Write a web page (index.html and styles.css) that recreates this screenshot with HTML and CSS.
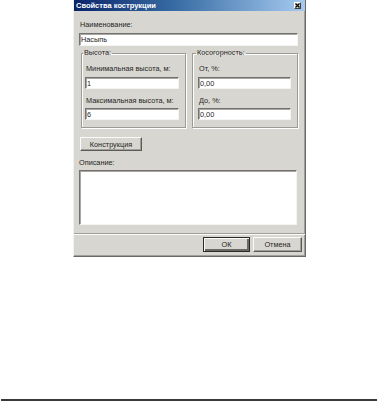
FILE: index.html
```html
<!doctype html>
<html lang="ru">
    <head>
        <meta charset="UTF-8" />
        <meta name="viewport" content="width=device-width, initial-scale=1.0" />
        <title>Свойства кострукции</title>
        <link rel="stylesheet" href="styles.css">
    </head>
    <body>
        <div class="page">
            <div class="dialog">
                <div class="titlebar">
                    <span class="title">Свойства кострукции</span>
                    <span class="close">
                        <svg width="5" height="5" viewBox="0 0 5 5">
                            <path d="M0.5 0.5 L4.5 4.5 M4.5 0.5 L0.5 4.5" stroke="#000" stroke-width="1.2" />
                        </svg>
                    </span>
                </div>

                <div class="content">
                    <div class="label label-first">Наименование:</div>
                    <input class="field field-name" type="text" value="Насыпь" />

                    <div class="groups">
                        <fieldset class="group group-height">
                            <legend>Высота:</legend>
                            <div class="label">Минимальная высота, м:</div>
                            <input class="field" type="text" value="1" />
                            <div class="label label-next">Максимальная высота, м:</div>
                            <input class="field" type="text" value="6" />
                        </fieldset>
                        <fieldset class="group group-slope">
                            <legend>Косогорность:</legend>
                            <div class="label">От, %:</div>
                            <input class="field" type="text" value="0,00" />
                            <div class="label label-next">До, %:</div>
                            <input class="field" type="text" value="0,00" />
                        </fieldset>
                    </div>

                    <button class="btn btn-construct" type="button">Конструкция</button>

                    <div class="label label-desc">Описание:</div>
                    <textarea class="field memo"></textarea>
                </div>

                <div class="separator"></div>

                <div class="footer">
                    <button class="btn btn-default" type="button">ОК</button>
                    <button class="btn" type="button">Отмена</button>
                </div>
            </div>

            <div class="rule"></div>
        </div>
    </body>
</html>
```

FILE: styles.css
```css
html,
body {
    margin: 0;
    background-color: #fff;
    font-family: "Liberation Sans", Arial, sans-serif;
    font-size: 7.3px;
    color: #262626;
}

.page {
    height: 100vh;
    display: flex;
    flex-direction: column;
}

.dialog {
    box-sizing: border-box;
    width: 233px;
    margin-left: 73px;
    background-color: #d8d6d0;
    border-left: 1px solid #f2f1ee;
    border-right: 1px solid #6a6964;
    border-bottom: 1px solid #6a6964;
    box-shadow: inset -1px -1px 0 #a19f99;
}

.titlebar {
    height: 11px;
    display: flex;
    align-items: center;
    justify-content: space-between;
    padding: 0 4px 0 2px;
    background: linear-gradient(90deg, #0a246a 0%, #3a6ea5 45%, #a6caf0 100%);
}

.title {
    color: #fff;
    font-weight: 700;
    font-size: 7.5px;
    line-height: 11px;
}

.close {
    width: 7px;
    height: 7px;
    display: flex;
    align-items: center;
    justify-content: center;
    background-color: #d8d6d0;
    border: 1px solid;
    border-color: #fff #404040 #404040 #fff;
    box-sizing: border-box;
}

.content {
    padding: 0 7px 0 5px;
}

.label {
    line-height: 9px;
    white-space: nowrap;
}

.label-first {
    margin: 9px 0 4px 1px;
}

.field {
    display: block;
    box-sizing: border-box;
    width: 100%;
    height: 12px;
    margin: 0;
    padding: 0 1px;
    font: inherit;
    color: #262626;
    background-color: #fff;
    border: 1px solid;
    border-color: #727170 #f4f4f2 #f4f4f2 #727170;
    box-shadow: inset 1px 1px 0 #a8a6a0;
    outline: none;
}

.field-name {
    height: 13px;
}

.groups {
    display: grid;
    grid-template-columns: 105px 106px;
    gap: 6px;
    margin-top: 3px;
    padding-left: 2px;
}

.group {
    margin: 0;
    min-width: 0;
    border: 1px solid #9d9b95;
    box-shadow: 1px 1px 0 #fff, inset 1px 1px 0 #fff;
    padding: 0 6px 7px 3px;
}

.group-slope {
    padding: 0 6px 7px 5px;
}

.group legend {
    margin-left: -2px;
    padding: 0 1px;
    line-height: 8px;
    color: #262626;
}

.group .label {
    margin: 7px 0 4px 1px;
}

.group .label-next {
    margin: 7px 0 3px 1px;
}

.btn {
    box-sizing: border-box;
    height: 15px;
    margin: 0;
    padding: 0;
    font: inherit;
    color: #262626;
    background-color: #d8d6d0;
    border: 1px solid;
    border-color: #fbfbfa #5c5b58 #5c5b58 #fbfbfa;
    box-shadow: inset -1px -1px 0 #a19f99;
}

.btn-construct {
    display: block;
    width: 62px;
    height: 14px;
    margin: 9px 0 0 1px;
}

.label-desc {
    margin: 7px 0 3px 0;
}

.memo {
    width: 218px;
    height: 55px;
    resize: none;
}

.separator {
    height: 1px;
    margin-top: 8px;
    background-color: #a19f99;
    border-bottom: 1px solid #fbfbfa;
}

.footer {
    display: flex;
    justify-content: flex-end;
    gap: 3px;
    padding: 2px 3px 4px 0;
}

.footer .btn {
    width: 49px;
}

.footer .btn-default {
    width: 47px;
    border: 1px solid #2a2a2a;
    box-shadow: inset 1px 1px 0 #fbfbfa, inset -2px -2px 0 #6a6964;
}

.rule {
    height: 2px;
    margin: auto 1px 0 1px;
    background-color: #3a3a3a;
}
```
